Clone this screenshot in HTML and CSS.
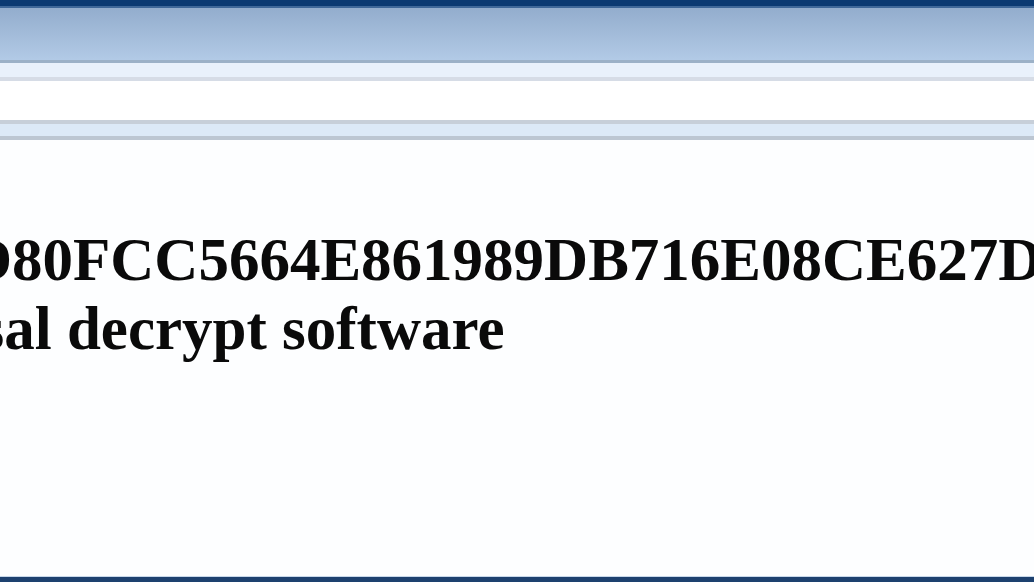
FILE: index.html
```html
<!DOCTYPE html>
<html>
<head>
<meta charset="utf-8">
<link rel="stylesheet" href="styles.css">
</head>
<body>
<div class="window">
  <div class="titlebar"></div>
  <div class="toolbar"></div>
  <div class="tabstrip"></div>
  <div class="address"></div>
  <div class="menuband"></div>
  <main class="content">
    <p class="line key">D80FCC5664E861989DB716E08CE627D</p>
    <p class="line sub">universal decrypt software</p>
  </main>
  <div class="statusbar"></div>
</div>
</body>
</html>
```
FILE: styles.css
```css
html, body {
  margin: 0;
  padding: 0;
  height: 100%;
  overflow: hidden;
  background: #fdfeff;
}
.window {
  display: flex;
  flex-direction: column;
  height: 582px;
}
.titlebar {
  height: 6px;
  background: #0b3a72;
  border-bottom: 2px solid #3f6899;
}
.toolbar {
  height: 52px;
  background: linear-gradient(#93adcd, #b2cae6);
  border-bottom: 3px solid #9cb1c7;
}
.tabstrip {
  height: 14px;
  background: #e9f1fb;
  border-bottom: 4px solid #d6dce6;
}
.address {
  height: 39px;
  background: #ffffff;
}
.menuband {
  height: 12px;
  background: #dce9f7;
  border-top: 4px solid #c7cfd9;
  border-bottom: 4px solid #bcc6d2;
}
.content {
  flex: 1;
  padding-top: 85px;
  font-family: "Liberation Serif", "Times New Roman", serif;
  font-weight: bold;
  font-size: 61px;
  line-height: 69px;
  color: #0a0a0a;
  white-space: nowrap;
}
.line {
  margin: 0;
}
.key {
  margin-left: -32px;
}
.sub {
  margin-left: -189px;
}
.statusbar {
  height: 5px;
  background: #1d416f;
  border-top: 1px solid #c8d8ea;
}
```
